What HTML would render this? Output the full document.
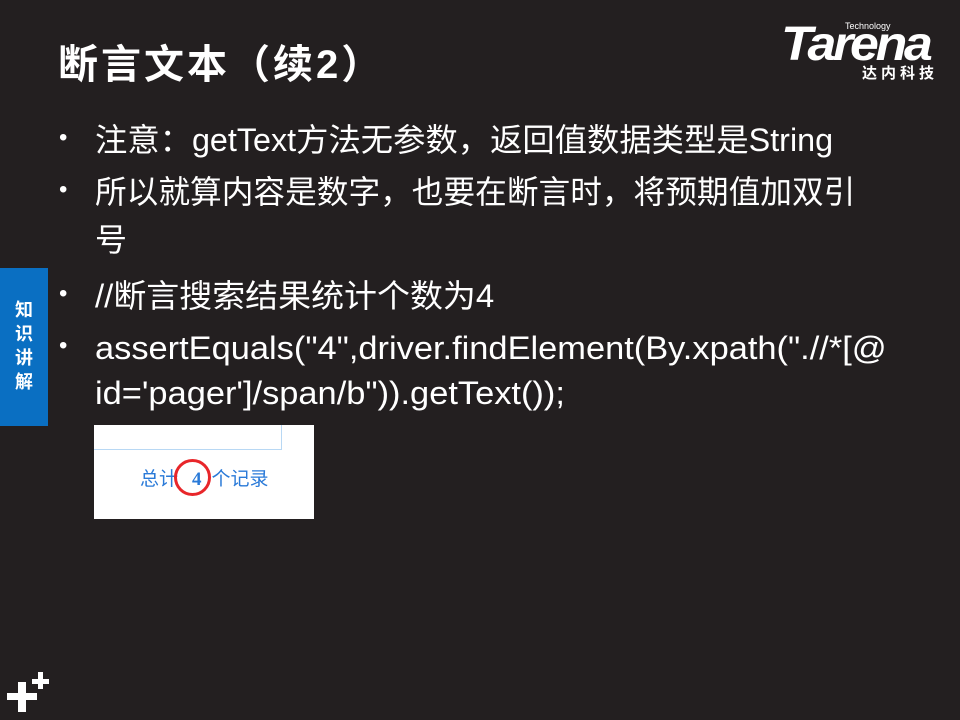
<!DOCTYPE html>
<html><head><meta charset="utf-8"><style>
body{margin:0;width:960px;height:720px;background:#231f20;position:relative;overflow:hidden;font-family:"Liberation Sans","Noto Sans CJK SC",sans-serif;color:#fff}
.t{position:absolute;left:58px;top:38px;font-size:40px;font-weight:bold;line-height:54px;white-space:nowrap;letter-spacing:3px}
.l{position:absolute;left:95px;font-size:32px;line-height:40px;white-space:nowrap;transform-origin:0 50%}
.b{position:absolute;left:59px;font-size:24px}
.side{position:absolute;left:0;top:268px;width:48px;height:158px;background:#0a6fc2;font-weight:bold;font-size:18px;text-align:center;padding-top:30px;box-sizing:border-box;line-height:24px}
.img{position:absolute;left:94px;top:425px;width:220px;height:94px;background:#fff;overflow:hidden}
</style></head><body>
<div class="t">断言文本（续2）</div>
<div style="position:absolute;left:781px;top:20px;font-size:48px;font-weight:bold;font-style:italic;letter-spacing:-3px;line-height:50px;transform:scaleX(1.08);transform-origin:0 0">Tarena</div>
<div style="position:absolute;left:845px;top:21px;font-size:9px">Technology</div>
<div style="position:absolute;left:862px;top:62px;font-size:15px;font-weight:bold;letter-spacing:4px">达内科技</div>
<div class="b" style="top:124px">•</div><div class="l" style="top:120px;transform:scaleX(1.01)">注意：getText方法无参数，返回值数据类型是String</div>
<div class="b" style="top:176px">•</div><div class="l" style="top:172px;transform:scaleX(0.99)">所以就算内容是数字，也要在断言时，将预期值加双引</div>
<div class="l" style="top:220px">号</div>
<div class="b" style="top:280px">•</div><div class="l" style="top:276px;transform:scaleX(1.03)">//断言搜索结果统计个数为4</div>
<div class="b" style="top:332px">•</div><div class="l" style="top:328px;transform:scaleX(1.075)">assertEquals("4",driver.findElement(By.xpath(".//*[@</div>
<div class="l" style="top:373px;transform:scaleX(1.075)">id='pager']/span/b")).getText());</div>
<div class="side">知<br>识<br>讲<br>解</div>
<div class="img">
<div style="position:absolute;left:-5px;top:-5px;width:191px;height:28px;border:1px solid #b8d8f4;background:#fff"></div>
<div style="position:absolute;left:46px;top:39px;font-size:19px;color:#2a7ad8;white-space:nowrap">总计<b style="margin:0 10px 0 14px;font-family:'Liberation Serif',serif">4</b>个记录</div>
<div style="position:absolute;left:80px;top:34px;width:31px;height:31px;border:3px solid #e8262a;border-radius:50%"></div>
</div>
<div style="position:absolute;left:7px;top:693px;width:30px;height:7px;background:#fff"></div>
<div style="position:absolute;left:18px;top:682px;width:8px;height:30px;background:#fff"></div>
<div style="position:absolute;left:32px;top:679px;width:17px;height:5px;background:#fff"></div>
<div style="position:absolute;left:38px;top:672px;width:5px;height:17px;background:#fff"></div>
</body></html>
